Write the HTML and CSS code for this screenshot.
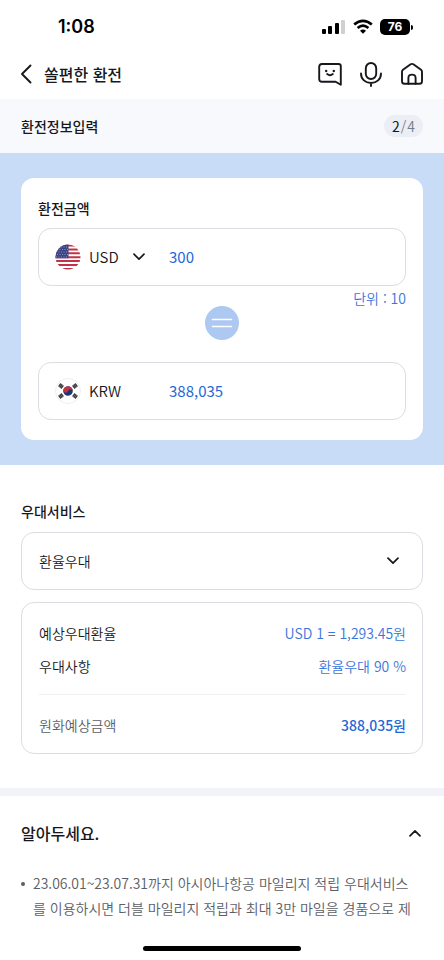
FILE: index.html
```html
<!DOCTYPE html>
<html lang="ko">
<head>
<meta charset="utf-8">
<meta name="viewport" content="width=device-width, initial-scale=1">
<title>쏠편한 환전</title>
<link rel="stylesheet" href="styles.css">
</head>
<body>
<div class="status">
  <span class="time">1:08</span>
  <div class="status-icons">
    <svg width="24" height="16" viewBox="0 0 24 16" aria-hidden="true">
      <rect x="0" y="10" width="4" height="5" rx="1"/><rect x="6" y="7" width="4" height="8" rx="1"/><rect x="13" y="4" width="4" height="11" rx="1"/><rect x="19" y="1" width="4" height="14" rx="1" fill="#d0d0d0"/>
    </svg>
    <svg width="20" height="16" viewBox="0 0 20 16" fill="none" stroke="#000" stroke-width="2.6" aria-hidden="true">
      <path d="M1.2 5.6Q10-2 18.8 5.6M4.6 9Q10 4.4 15.4 9"/><path d="M7 11.8Q10 9.4 13 11.8L10 14.8Z" fill="#000" stroke="none"/>
    </svg>
    <span class="battery">76</span>
  </div>
</div>
<header class="topbar">
  <button class="icon-btn" type="button" aria-label="뒤로">
    <svg width="12" height="20" viewBox="0 0 12 20"><path d="M10.5 1.5 2 10 10.5 18.5"/></svg>
  </button>
  <h1>쏠편한 환전</h1>
  <nav class="actions">
    <button class="icon-btn" type="button" aria-label="챗봇">
      <svg width="24" height="24" viewBox="0 0 24 24"><path d="M4 2H20.5Q22.8 2 22.8 4.3V22.8L17.6 19.8H4Q1.2 19.8 1.2 17V4.8Q1.2 2 4 2Z"/><path d="M9.2 12Q12 14.4 14.8 12"/><circle cx="8.2" cy="9" r="1.2" class="dot"/><circle cx="15.8" cy="9" r="1.2" class="dot"/></svg>
    </button>
    <button class="icon-btn" type="button" aria-label="음성">
      <svg width="24" height="26" viewBox="0 0 24 26"><rect x="6.8" y="2" width="10.4" height="16" rx="5.2"/><path d="M2 12.5C2 18.3 6.3 22 12 22S22 18.3 22 12.5M12 22V25"/></svg>
    </button>
    <button class="icon-btn" type="button" aria-label="홈">
      <svg width="24" height="24" viewBox="0 0 24 24"><path d="M2 9.8Q2 8.6 3 7.8L10.6 2.3Q12 1.4 13.4 2.3L21 7.8Q22 8.6 22 9.8V19.2Q22 21.8 19.4 21.8H4.6Q2 21.8 2 19.2Z"/><path d="M8.4 21.8V16C8.4 11.5 15.6 11.5 15.6 16V21.8"/></svg>
    </button>
  </nav>
</header>
<div class="step">
  <h2>환전정보입력</h2>
  <span class="pill"><b>2</b><span>/</span><span>4</span></span>
</div>
<main>
  <section class="exchange">
    <div class="card">
      <h2>환전금액</h2>
      <div class="field">
        <svg class="flag" width="26" height="26" viewBox="0 0 26 26" aria-hidden="true">
          <clipPath id="us"><circle cx="13" cy="13" r="12.5"/></clipPath>
          <g clip-path="url(#us)">
            <path fill="#fff" d="M0 0H26V26H0Z"/>
            <path stroke="#be3446" stroke-width="2" d="M0 1.5H26M0 5.4H26M0 9.3H26M0 13.2H26M0 17.1H26M0 21H26M0 24.9H26"/>
            <path fill="#3b4585" d="M0 0H13.5V14.2H0Z"/>
            <path stroke="#8b93c0" stroke-width="1" stroke-dasharray="1 1.5" d="M1 3H13M2 5.5H13M1 8H13M2 10.5H13M1 13H13"/>
          </g>
        </svg>
        <div class="currency">
          <select class="code" aria-label="통화"><option>USD</option></select>
          <svg class="chevron" width="12" height="8" viewBox="0 0 12 8"><path d="M1 1.2 6 6.2 11 1.2"/></svg>
        </div>
        <input class="amount" type="text" value="300" aria-label="외화금액">
      </div>
      <p class="unit">단위 : 10</p>
      <div class="equal"><svg width="34" height="34" viewBox="0 0 34 34" aria-hidden="true"><circle cx="17" cy="17" r="17" fill="#adc9f2"/><path d="M7.5 13.5H26.5M7.5 20.5H26.5" stroke="#fff" stroke-width="1.6" stroke-linecap="round"/></svg></div>
      <div class="field">
        <svg class="flag" width="26" height="26" viewBox="0 0 26 26" aria-hidden="true">
          <circle cx="13" cy="13" r="12.5" fill="#fff" stroke="#eeeff4"/>
          <g transform="rotate(20 13 13)"><circle cx="13" cy="13" r="4.8" fill="#1f3475"/><path fill="#c33443" d="M8.2 13A4.8 4.8 0 0 1 17.8 13A2.4 2.4 0 0 0 13 13A2.4 2.4 0 0 1 8.2 13Z"/></g>
          <g stroke="#3d3d3f" stroke-width="1.4"><path d="M3.6 8.7 6 5.5M4.8 9.6 7.2 6.4M6 10.5 8.4 7.3M20 5.5 22.4 8.7M18.8 6.4 21.2 9.6M17.6 7.3 20 10.5M3.6 17.3 6 20.5M4.8 16.4 7.2 19.6M6 15.5 8.4 18.7M20 20.5 22.4 17.3M18.8 19.6 21.2 16.4M17.6 18.7 20 15.5"/></g>
        </svg>
        <div class="currency"><span class="code">KRW</span></div>
        <input class="amount" type="text" value="388,035" aria-label="원화금액" readonly>
      </div>
    </div>
  </section>
  <section class="service">
    <h2><label for="service">우대서비스</label></h2>
    <div class="select-box">
      <select id="service"><option>환율우대</option></select>
      <svg class="chevron" width="12" height="8" viewBox="0 0 12 8"><path d="M1 1.2 6 6.2 11 1.2"/></svg>
    </div>
    <dl class="summary">
      <div><dt>예상우대환율</dt><dd>USD 1 = 1,293.45원</dd></div>
      <div><dt>우대사항</dt><dd>환율우대 90 %</dd></div>
      <div class="total"><dt>원화예상금액</dt><dd>388,035원</dd></div>
    </dl>
  </section>
  <section class="notice">
    <button class="notice-head" type="button" aria-expanded="true">
      <span>알아두세요.</span>
      <svg class="chevron" width="12" height="8" viewBox="0 0 12 8"><path d="M1 6.8 6 1.8 11 6.8"/></svg>
    </button>
    <ul><li>23.06.01~23.07.31까지 아시아나항공 마일리지 적립 우대서비스를 이용하시면 더블 마일리지 적립과 최대 3만 마일을 경품으로 제</li></ul>
  </section>
</main>
<div class="home-indicator"></div>
</body>
</html>
```
FILE: styles.css
```css
* { box-sizing: border-box; margin: 0; padding: 0; }
body {
  display: flex;
  flex-direction: column;
  min-height: 100vh;
  background: #fff;
  color: #17181c;
  font: 350 14px/20px "Noto Sans CJK KR DemiLight", "Noto Sans CJK KR", sans-serif;
}
button, select, input {
  font: inherit;
  color: inherit;
  background: none;
  border: 0;
  appearance: none;
  outline: 0;
}
h1, h2, b, .notice-head, .amount, .total dd { font-family: "Noto Sans CJK KR", sans-serif; }
h2 { font-size: 14px; line-height: 20px; font-weight: 500; }

.status {
  display: flex;
  justify-content: space-between;
  align-items: center;
  height: 50px;
  padding: 4px 34px 0 58px;
}
.time { font: 600 18px/24px Inter, sans-serif; color: #000; }
.status-icons { display: flex; align-items: center; gap: 7px; }
.status-icons svg { display: block; }
.battery {
  position: relative;
  width: 30px;
  border-radius: 5px;
  background: #000;
  color: #fff;
  text-align: center;
  font: 700 12px/16px Inter, sans-serif;
}
.battery::after {
  content: "";
  position: absolute;
  left: 31px;
  top: 6px;
  width: 2px;
  height: 5px;
  border-radius: 0 2px 2px 0;
  background: #000;
}

.topbar {
  display: flex;
  align-items: center;
  gap: 12px;
  height: 49px;
  padding: 0 20px 2px;
}
.topbar h1 { flex: 1; font-size: 16px; line-height: 24px; font-weight: 500; }
.icon-btn { display: flex; }
.icon-btn svg {
  fill: none;
  stroke: #17181c;
  stroke-width: 1.9;
  stroke-linecap: round;
  stroke-linejoin: round;
}
.icon-btn .dot { fill: #17181c; stroke: none; }
.actions { display: flex; align-items: center; gap: 17px; }

.step {
  display: flex;
  justify-content: space-between;
  align-items: center;
  height: 54px;
  padding: 0 21px;
  background: #f8f9fc;
}
.pill {
  display: flex;
  gap: 1px;
  padding: 0 8px;
  border-radius: 11px;
  background: #eceef5;
  color: #777b85;
  font-size: 14px;
  line-height: 22px;
}
.pill b { color: #17181c; font-weight: 400; }

.exchange { padding: 25px 21px; background: #c8dbf7; }
.card { padding: 20px 17px; border-radius: 13px; background: #fff; }
.field {
  display: flex;
  align-items: center;
  height: 58px;
  padding: 0 16px;
  border: 1px solid #dcdde2;
  border-radius: 13px;
  font-size: 15px;
}
.card h2 { margin-bottom: 10px; }
.flag { flex: none; margin-right: 8px; }
.currency { display: flex; align-items: center; gap: 14px; width: 80px; }
.code { line-height: 24px; }
.amount { flex: 1; min-width: 0; color: #2468d8; font-weight: 400; }
.chevron {
  flex: none;
  fill: none;
  stroke: #17181c;
  stroke-width: 1.7;
  stroke-linecap: round;
  stroke-linejoin: round;
}
.unit { margin-top: 2px; color: #3b75dc; text-align: right; }
.equal { display: flex; justify-content: center; margin: -2px 0 22px; }

.service { padding: 36px 21px 34px; border-bottom: 8px solid #f2f3f9; }
.service h2 { margin-bottom: 11px; }
.select-box { position: relative; margin-bottom: 12px; }
.select-box select {
  display: block;
  width: 100%;
  height: 58px;
  padding: 0 17px;
  border: 1px solid #dcdde2;
  border-radius: 13px;
}
.select-box .chevron { position: absolute; right: 24px; top: 25px; pointer-events: none; }
.summary {
  display: flex;
  flex-direction: column;
  gap: 13px;
  padding: 20px 16px 18px 17px;
  border: 1px solid #dcdde2;
  border-radius: 13px;
}
.summary div { display: flex; justify-content: space-between; }
.summary dd { color: #3b75dc; }
.summary .total { margin-top: 5px; padding-top: 20px; border-top: 1px solid #f0f0f2; color: #5c5e66; }
.summary .total dd { color: #2468d8; font-weight: 500; }

.notice { padding: 25px 21px 0; color: #5c5e66; }
.notice-head {
  display: flex;
  justify-content: space-between;
  align-items: center;
  width: 100%;
  padding-right: 2px;
  color: #17181c;
  font-size: 16px;
  line-height: 24px;
  font-weight: 500;
}
.notice ul { margin-top: 26px; padding-right: 8px; list-style: none; }
.notice li { position: relative; padding-left: 12px; line-height: 25px; }
.notice li::before {
  content: "";
  position: absolute;
  left: 0;
  top: 11px;
  width: 4px;
  height: 4px;
  border-radius: 50%;
  background: #5c5e66;
}
.home-indicator {
  width: 158px;
  height: 5px;
  margin: auto auto 9px;
  border-radius: 3px;
  background: #000;
}
```
